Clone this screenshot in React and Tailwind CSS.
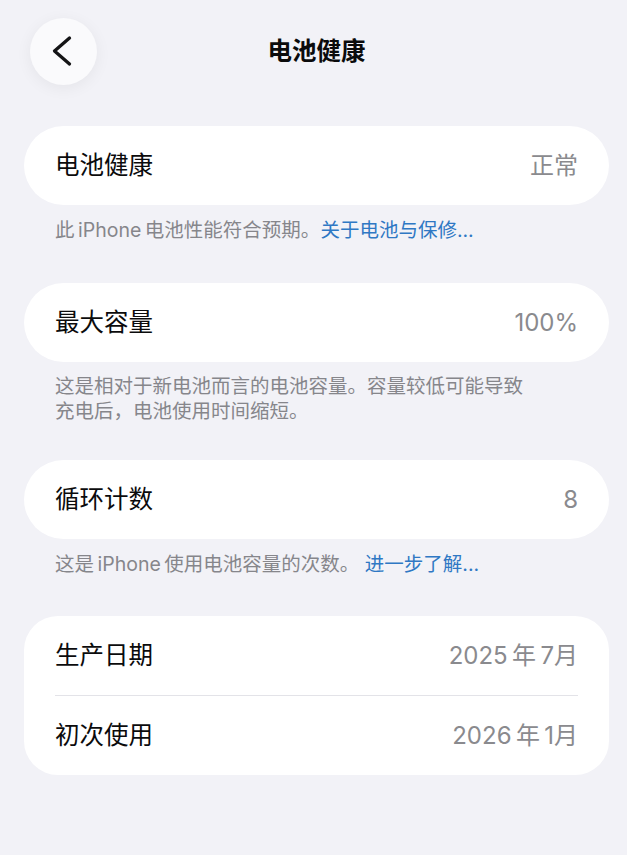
import React from "react";

const FONT = { fontFamily: "Inter, 'Noto Sans CJK SC', 'Noto Sans', sans-serif" };

function Row({ label, value }) {
  return (
    <div className="flex h-[79px] items-center justify-between px-[31px]">
      <span className="text-[24.5px] leading-none text-[#0b0b0c]">{label}</span>
      <span className="text-[24px] leading-none text-[#8a8a8e]">{value}</span>
    </div>
  );
}

function Caption({ children, className }) {
  return (
    <p className={"pl-[31px] pr-[20px] text-[19.5px] leading-[25px] text-[#86868b] " + className}>
      {children}
    </p>
  );
}

export default function App() {
  return (
    <div style={FONT} className="min-h-[855px] w-[627px] bg-[#f2f2f7] pl-[24px] pr-[18px] pt-[18px]">
      <div className="grid h-[67px] grid-cols-[73px_1fr_73px] items-center">
        <button className="ml-[6px] flex h-[67px] w-[67px] items-center justify-center rounded-full bg-[#fafafc] shadow-[0_3px_16px_rgba(0,0,0,0.06)]">
          <svg width="67" height="67" viewBox="0 0 67 67" fill="none">
            <path d="M39.5 20 L24.5 33 L39.5 46" stroke="#141416" strokeWidth="3.3" strokeLinecap="round" strokeLinejoin="round" />
          </svg>
        </button>
        <h1 className="text-center text-[24.5px] font-semibold leading-none text-[#0b0b0c]">电池健康</h1>
        <div />
      </div>

      <div className="mt-[41px] rounded-[40px] bg-white">
        <Row label="电池健康" value="正常" />
      </div>
      <Caption className="mt-[13px] mb-[40px]">
        {"此\u2009iPhone\u2009电池性能符合预期。"}
        <span className="text-[#2f78c4]">关于电池与保修...</span>
      </Caption>

      <div className="rounded-[40px] bg-white">
        <Row label="最大容量" value="100%" />
      </div>
      <Caption className="mt-[12px] mb-[36px]">
        这是相对于新电池而言的电池容量。容量较低可能导致
        <br />
        充电后，电池使用时间缩短。
      </Caption>

      <div className="rounded-[40px] bg-white">
        <Row label="循环计数" value="8" />
      </div>
      <Caption className="mt-[13px] mb-[39px]">
        {"这是\u2009iPhone\u2009使用电池容量的次数。 "}
        <span className="text-[#2f78c4]">进一步了解...</span>
      </Caption>

      <div className="rounded-[34px] bg-white">
        <Row label="生产日期" value={"2025\u2009年\u20097月"} />
        <div className="mx-[31px] h-px bg-[#e3e3e8]" />
        <Row label="初次使用" value={"2026\u2009年\u20091月"} />
      </div>
    </div>
  );
}
